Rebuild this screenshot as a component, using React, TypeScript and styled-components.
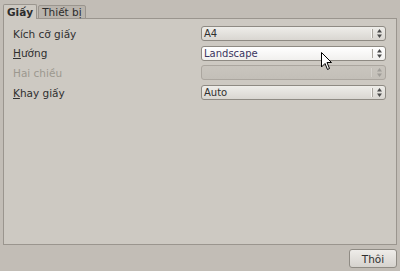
import React from 'react'
import styled, { createGlobalStyle } from 'styled-components'

const GlobalStyle = createGlobalStyle`
    html, body {
        margin: 0;
        padding: 0;
        background: #c2bdb6;
    }
    body {
        font-family: "DejaVu Sans", "Liberation Sans", sans-serif;
        font-size: 10.5px;
        color: #2f2f2f;
    }
`

const Window = styled.div`
    position: relative;
    width: 400px;
    height: 271px;
    box-sizing: border-box;
    padding: 4px 3px 3px 3px;
    display: flex;
    flex-direction: column;
`

const TabBar = styled.div`
    display: flex;
    align-items: flex-end;
    height: 15px;
    position: relative;
    z-index: 1;
`

const Tab = styled.div<{ $active?: boolean }>`
    height: ${p => (p.$active ? 15 : 14)}px;
    box-sizing: border-box;
    padding: 0 3px;
    display: flex;
    align-items: center;
    border: 1px solid #9a958e;
    border-bottom: ${p => (p.$active ? 'none' : '1px solid #9a958e')};
    border-radius: 2px 2px 0 0;
    background: ${p => (p.$active ? '#cdc9c2' : '#b9b4ad')};
    font-weight: ${p => (p.$active ? 'bold' : 'normal')};
    color: #2c2c2c;
    margin-right: 1px;
`

const Panel = styled.div`
    height: 228px;
    margin-top: -1px;
    box-sizing: border-box;
    background: #cdc9c2;
    border: 1px solid #9a958e;
    padding: 7px 10px 0 9px;
    display: grid;
    grid-template-columns: 188px 185px;
    grid-auto-rows: 15px;
    row-gap: 4.7px;
    align-content: start;
`

const Label = styled.div<{ $disabled?: boolean }>`
    display: flex;
    align-items: center;
    color: ${p => (p.$disabled ? '#9c988f' : '#2f2f2f')};
    u {
        text-decoration: underline;
        text-underline-offset: 1px;
    }
`

const Combo = styled.div<{ $focused?: boolean; $disabled?: boolean }>`
    position: relative;
    box-sizing: border-box;
    height: 15px;
    border: 1px solid ${p => (p.$disabled ? '#aba69f' : '#8e8a83')};
    border-radius: 3px;
    background: ${p =>
        p.$disabled
            ? 'linear-gradient(#c9c5be, #c3bfb8)'
            : p.$focused
            ? 'linear-gradient(#ffffff, #f1f0ee)'
            : 'linear-gradient(#eeede9, #d9d6d1)'};
    display: flex;
    align-items: center;
    padding-left: 2px;
    color: ${p => (p.$focused ? '#3a3560' : '#2f2f2f')};
    font-size: 10px;
`

const Stepper = styled.div<{ $disabled?: boolean }>`
    position: absolute;
    right: 0;
    top: 2px;
    bottom: 2px;
    width: 12px;
    border-left: 1px solid ${p => (p.$disabled ? '#bcb8b1' : '#a9a59e')};
    box-shadow: -1px 0 0 #f7f6f4;
    display: flex;
    align-items: center;
    justify-content: center;
    opacity: ${p => (p.$disabled ? 0.3 : 1)};
`

const Footer = styled.div`
    display: flex;
    justify-content: flex-end;
    padding-top: 4px;
`

const Button = styled.div`
    width: 48px;
    height: 19px;
    box-sizing: border-box;
    border: 1px solid #8f8b84;
    border-radius: 3px;
    background: linear-gradient(#eeece9, #d6d3ce);
    display: flex;
    align-items: center;
    justify-content: center;
    color: #2f2f2f;
`

const Cursor = styled.svg`
    position: absolute;
    left: 321px;
    top: 52px;
`

const Arrows: React.FC = () => (
    <svg width="5" height="9" viewBox="0 0 5 9">
        <path d="M2.5 0 L5 3.5 L0 3.5 Z" fill="#4a4a4a" />
        <path d="M0 5.5 L5 5.5 L2.5 9 Z" fill="#4a4a4a" />
    </svg>
)

const rows = [
    { label: 'Kích cỡ giấy', value: 'A4' },
    { label: 'Hướng', underline: 'H', value: 'Landscape', focused: true },
    { label: 'Hai chiều', value: '', disabled: true },
    { label: 'Khay giấy', underline: 'K', value: 'Auto' },
]

const App: React.FC = () => (
    <Window>
        <GlobalStyle />
        <TabBar>
            <Tab $active>Giấy</Tab>
            <Tab>Thiết bị</Tab>
        </TabBar>
        <Panel>
            {rows.map(r => (
                <React.Fragment key={r.label}>
                    <Label $disabled={r.disabled}>
                        {r.underline ? (
                            <span>
                                <u>{r.underline}</u>
                                {r.label.slice(1)}
                            </span>
                        ) : (
                            r.label
                        )}
                    </Label>
                    <Combo $focused={r.focused} $disabled={r.disabled}>
                        {r.value}
                        <Stepper $disabled={r.disabled}>
                            <Arrows />
                        </Stepper>
                    </Combo>
                </React.Fragment>
            ))}
        </Panel>
        <Footer>
            <Button>Thôi</Button>
        </Footer>
        <Cursor width="12" height="19" viewBox="0 0 12 19">
            <path
                d="M0.5 0.5 L0.5 15 L4 11.5 L6.5 17.5 L8.5 16.5 L6 10.5 L10.5 10.5 Z"
                fill="#ffffff"
                stroke="#000000"
                strokeWidth="1"
                strokeLinejoin="round"
            />
        </Cursor>
    </Window>
)

export default App
